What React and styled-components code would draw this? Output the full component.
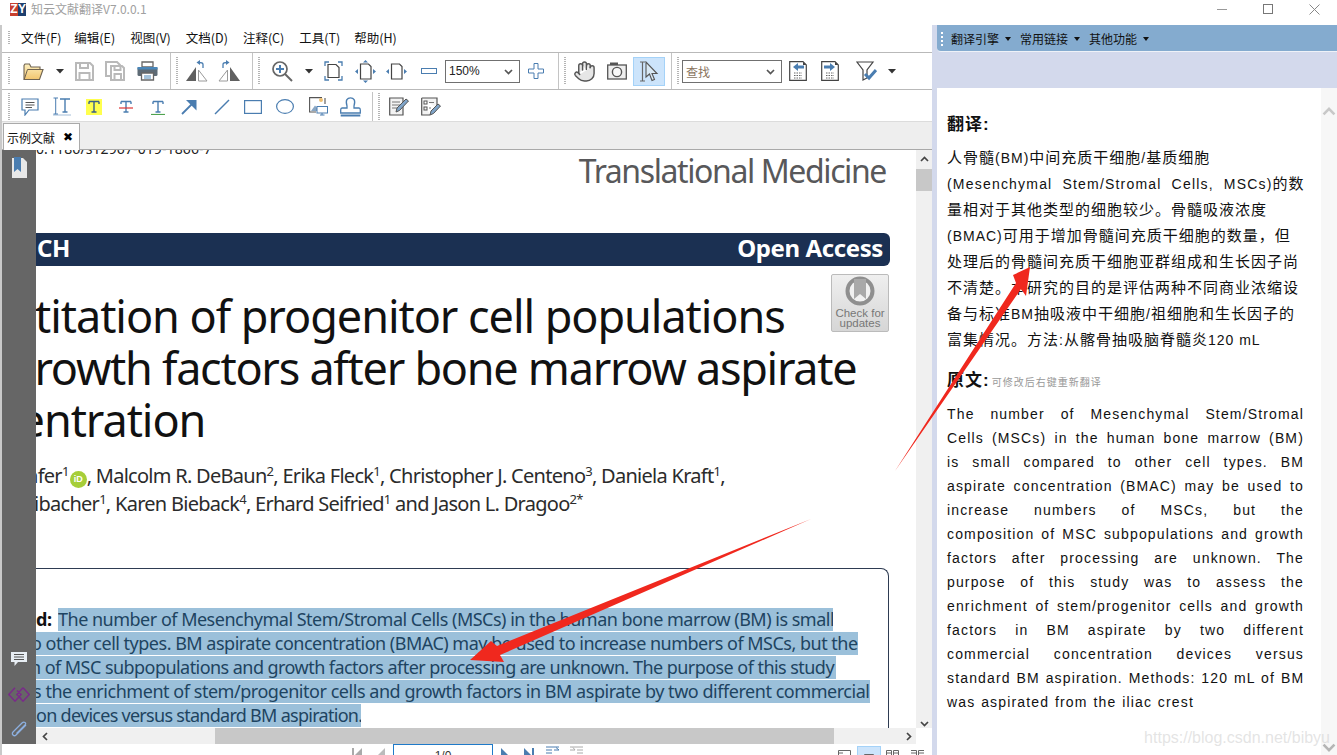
import React from "react";
import styled, { createGlobalStyle } from "styled-components";
import { Hand } from "lucide-react";

const cjk = `"Noto Sans CJK SC", sans-serif`;
const ui = `"Liberation Sans", "Noto Sans CJK SC", sans-serif`;
const pdf = `"Noto Sans", "Open Sans", sans-serif`;
const BLUE = "#4a7db0";

const Global = createGlobalStyle`
  html, body { margin: 0; padding: 0; background: #fff; }
  * { box-sizing: border-box; }
`;

const Ico = ({ w = 20, h = 20, vb, children }) => (
  <svg width={w} height={h} viewBox={vb || `0 0 ${w} ${h}`} fill="none">
    {children}
  </svg>
);

/* toolbar 1 */
const FolderIcon = () => (
  <Ico w={21} h={20}>
    <defs>
      <linearGradient id="fold" x1="0" y1="0" x2="0" y2="1">
        <stop offset="0" stopColor="#fdf0c0" />
        <stop offset="1" stopColor="#f2c56e" />
      </linearGradient>
    </defs>
    <path d="M1 4.5V18.5H16.5L20 8.5H17V6H8L6.5 3H2Z" fill="url(#fold)" stroke="#6e6250" strokeWidth="1.1" />
    <path d="M1.2 18.5L4.5 8.5H20" stroke="#6e6250" strokeWidth="1" />
  </Ico>
);
const Caret = () => (
  <Ico w={8} h={5}>
    <path d="M0 0H8L4 4.5Z" fill="#333" />
  </Ico>
);
const SmallCaret = styled.i`
  width: 0;
  height: 0;
  border: 3px solid transparent;
  border-top: 4px solid #111;
  border-bottom: none;
`;
const SaveIcon = () => (
  <Ico w={19} h={19}>
    <path d="M1 1H15L18 4V18H1Z" stroke="#b9b9b9" strokeWidth="2" />
    <path d="M5 1V6H13V1M4.5 18V11H14.5V18" stroke="#b9b9b9" strokeWidth="2" />
  </Ico>
);
const SaveAllIcon = () => (
  <Ico w={20} h={20}>
    <path d="M1 1H12L15 4V15H1Z" stroke="#b9b9b9" strokeWidth="2" />
    <path d="M6 5H17L19 7V19H6Z" fill="#fff" stroke="#b9b9b9" strokeWidth="2" />
    <path d="M9.5 5V9H15.5V5M9.5 19V13H16V19" stroke="#b9b9b9" strokeWidth="2" />
  </Ico>
);
const PrintIcon = () => (
  <Ico w={21} h={20}>
    <path d="M5 1H16V6H5Z" fill="#fff" stroke="#666" strokeWidth="1.3" />
    <rect x="0.5" y="6" width="20" height="9" rx="1.5" fill="#5d6a75" />
    <rect x="0.5" y="6" width="20" height="2.5" fill="#4a86b8" />
    <path d="M4.5 12H16.5V19H4.5Z" fill="#fff" stroke="#666" strokeWidth="1.3" />
    <path d="M7 15H14M7 17H14" stroke="#4a86b8" />
  </Ico>
);
const MirrorIcon = ({ flip }) => (
  <Ico w={22} h={22}>
    <g transform={flip ? "translate(22 0) scale(-1 1)" : undefined}>
      <path d="M10 7L0 21H10Z" fill="#606060" />
      <path d="M12.5 10L21 21H12.5Z" fill="#fff" stroke="#9a9a9a" />
      <path d="M17 8V4.5C17 3 15.5 2.5 13 2.5" stroke={BLUE} strokeWidth="1.3" />
      <path d="M14 0L10.5 2.5L14 5Z" fill={BLUE} />
    </g>
  </Ico>
);
const ZoomIcon = () => (
  <Ico w={21} h={21}>
    <circle cx="8" cy="8" r="7" fill="#fff" stroke="#666" strokeWidth="1.7" />
    <path d="M8 4V12M4 8H12" stroke={BLUE} strokeWidth="2" />
    <path d="M13 13L20 20" stroke="#666" strokeWidth="2" />
  </Ico>
);
const FitPageIcon = () => (
  <Ico w={19} h={20}>
    <path d="M1 5V1H5M14 1H18V5M1 15V19H5M14 19H18V15" stroke={BLUE} strokeWidth="1.3" />
    <path d="M4 3.5H12L15 6.5V16.5H4Z" fill="#fff" stroke="#444" strokeWidth="1.2" />
  </Ico>
);
const FitHeightIcon = () => (
  <Ico w={21} h={23}>
    <path d="M5.5 4H13.5L16 6.5V19H5.5Z" fill="#fff" stroke="#444" strokeWidth="1.2" />
    <path d="M10.5 0L8 2.5H13ZM10.5 23L8 20.5H13ZM0 11.5L3 9V14ZM21 11.5L18 9V14Z" fill={BLUE} />
  </Ico>
);
const FitWidthIcon = () => (
  <Ico w={21} h={17}>
    <path d="M5.5 1H13.5L16 3.5V16H5.5Z" fill="#fff" stroke="#444" strokeWidth="1.2" />
    <path d="M0 8.5L3 6V11ZM21 8.5L18 6V11Z" fill={BLUE} />
  </Ico>
);
const MinusIcon = () => (
  <Ico w={16} h={6}>
    <rect x="0.5" y="0.5" width="15" height="5" stroke={BLUE} />
  </Ico>
);
const PlusIcon = () => (
  <Ico w={16} h={16}>
    <path d="M6 .5H10V6H15.5V10H10V15.5H6V10H.5V6H6Z" stroke={BLUE} fill="#fff" />
  </Ico>
);
const CameraIcon = () => (
  <Ico w={20} h={18}>
    <path d="M3 3V0.5H11V3" fill="#555" />
    <rect x="0.7" y="3" width="18.6" height="14" fill="#eee" stroke="#555" strokeWidth="1.3" />
    <circle cx="10" cy="10" r="4.6" fill="#f8f8f8" stroke="#555" strokeWidth="1.4" />
  </Ico>
);
const SelectIcon = () => (
  <Ico w={20} h={21}>
    <path d="M1 1H6M1 20H6M3.5 1V20" stroke="#666" strokeWidth="1.2" />
    <path d="M7 1V16L10.5 13L13 19.5L15.5 18.5L13 12.5H18Z" fill="#d8e8f4" stroke="#555" strokeWidth="1.1" />
  </Ico>
);
const DocArrow = ({ right }) => (
  <Ico w={18} h={20}>
    <path d="M.7.7H14L17.3 4V19.3H.7Z" fill="#fff" stroke="#444" strokeWidth="1.2" />
    <path d="M14 .7V4H17.3Z" fill="#444" />
    <path d={right ? "M3 4.5H9V2L14 6L9 10V7.5H3Z" : "M15 4.5H9V2L4 6L9 10V7.5H15Z"} fill={BLUE} />
    <path d="M5 12H13M5 14.5H13M5 17H13" stroke="#666" strokeDasharray="1.5 1" />
  </Ico>
);
const FilterIcon = () => (
  <Ico w={21} h={20}>
    <path d="M1 1H17L11 9V17L7 19V9Z" fill="#fff" stroke="#444" strokeWidth="1.2" />
    <path d="M9 13L13 17L20 9" stroke={BLUE} strokeWidth="3" />
  </Ico>
);

/* toolbar 2 */
const CommentIcon = () => (
  <Ico w={18} h={18}>
    <path d="M1 1H17V12H8L4 17V12H1Z" fill="#fff" stroke={BLUE} strokeWidth="1.2" />
    <path d="M4.5 4.5H13.5M4.5 7H13.5M4.5 9.5H11" stroke="#555" />
  </Ico>
);
const TextSelIcon = () => (
  <Ico w={18} h={19}>
    <path d="M.5 1H5M.5 17H5M2.7 1V17" stroke={BLUE} />
    <path d="M7 2H17M12 2V15M9.5 15H14.5" stroke={BLUE} strokeWidth="1.4" />
    <path d="M.5 18H18" stroke={BLUE} strokeDasharray="1 1" />
  </Ico>
);
const TMark = ({ bg, line, y = 17 }) => (
  <Ico w={16} h={16}>
    {bg && <rect width="16" height="16" fill={bg} />}
    <path d="M3 2.5H13M8 2.5V13M5.5 13H10.5M3 2.5V5M13 2.5V5" stroke={bg ? "#3a5f8a" : BLUE} strokeWidth="1.4" />
    {line && <path d={`M1 ${y > 15 ? 15.5 : y}H15`} stroke={line} strokeWidth="1.2" />}
  </Ico>
);
const ArrowIcon = () => (
  <Ico w={16} h={16}>
    <path d="M1 15L12 4" stroke={BLUE} strokeWidth="1.8" />
    <path d="M5 1H15.5V11.5Z" fill={BLUE} />
  </Ico>
);
const LineIcon = () => (
  <Ico w={16} h={16}>
    <path d="M1 15L15 1" stroke={BLUE} strokeWidth="1.4" />
  </Ico>
);
const RectIcon = () => (
  <Ico w={18} h={14}>
    <rect x=".6" y=".6" width="16.8" height="12.8" stroke={BLUE} strokeWidth="1.2" />
  </Ico>
);
const OvalIcon = () => (
  <Ico w={18} h={15}>
    <ellipse cx="9" cy="7.5" rx="8.4" ry="6.9" stroke={BLUE} strokeWidth="1.2" />
  </Ico>
);
const ImageIcon = () => (
  <Ico w={19} h={19}>
    <path d="M13 .6H.6V15H7" stroke="#555" strokeWidth="1.1" />
    <path d="M2 14L6 8.5L9 12V14Z" fill="#8aa7c4" />
    <circle cx="12" cy="3" r="2" fill="#f0c070" />
    <path d="M16 1V7" stroke="#555" strokeWidth="1.1" />
    <rect x="8" y="9.5" width="10.5" height="6.5" fill="#fff" stroke={BLUE} />
    <path d="M11 18H15.5M13 16V18" stroke={BLUE} />
  </Ico>
);
const StampIcon = () => (
  <Ico w={21} h={20}>
    <path d="M7 9C5 3 7.5 .8 10.5 .8S16 3 14 9V11H19C20 11 20.3 12 20.3 13V16H.7V13C.7 12 1 11 2 11H7Z" fill="#fff" stroke={BLUE} strokeWidth="1.3" />
    <path d="M.7 18.5H20.3" stroke={BLUE} strokeWidth="2" />
  </Ico>
);
const NoteIcon = () => (
  <Ico w={20} h={19}>
    <path d="M.7 1H14V18H.7Z" fill="#f3f3f3" stroke="#555" strokeWidth="1.2" />
    <path d="M3 5H11M3 8H11M3 11H8" stroke="#777" />
    <path d="M7 15L8 11L17 2L19.5 4L10.5 13.5Z" fill="#7fa4c8" stroke="#555" />
  </Ico>
);
const CheckNoteIcon = () => (
  <Ico w={20} h={19}>
    <path d="M.7 1H16V11M9 18H.7V1" fill="#f3f3f3" stroke="#555" strokeWidth="1.2" />
    <rect x="3" y="4" width="3" height="3" stroke="#555" />
    <rect x="3" y="10" width="3" height="3" stroke="#555" />
    <path d="M8 5.5H13M8 11H10" stroke="#777" />
    <path d="M9 18L10 14L17 7L19.5 9L12.5 16.5Z" fill="#7fa4c8" stroke="#555" />
  </Ico>
);
const Grip = styled.i`
  display: block;
  flex: none;
  width: 2px;
  height: ${(p) => p.$h || 28}px;
  margin-left: ${(p) => p.$ml || 0}px;
  background: repeating-linear-gradient(#b5b5b5 0 1px, transparent 1px 2px);
`;

/* page */
const Page = styled.div`
  position: relative;
  width: 1337px;
  height: 755px;
  overflow: hidden;
  background: #fff;
  font-family: ${ui};
`;
const TitleBar = styled.div`
  height: 25px;
  display: flex;
  align-items: center;
  padding-left: 10px;
`;
const LogoBox = styled.div`
  display: flex;
  margin-top: -7px;
`;
const LogoLetter = styled.span`
  width: 8px;
  height: 13px;
  background: ${(p) => p.$bg};
  color: #fff;
  font: bold 12px/13px "Liberation Sans", sans-serif;
  text-align: center;
`;
const AppName = styled.span`
  margin-left: 5px;
  margin-top: -8px;
  color: #a0a0a0;
  font: 12px ${cjk};
`;
const WinBtns = styled.div`
  margin-left: auto;
  display: flex;
  align-items: center;
  margin-top: -7px;
  padding-right: 17px;
  gap: 35px;
`;
const Body = styled.div`
  display: flex;
  height: 730px;
`;
const LeftCol = styled.div`
  width: 932px;
  display: flex;
  flex-direction: column;
  border-left: 2px solid #c9c9c9;
`;
const MenuRow = styled.div`
  height: 28px;
  display: flex;
  align-items: center;
  padding: 0 0 2px 6px;
  border-bottom: 1px solid #b9b9b9;
`;
const MenuItem = styled.span`
  margin-left: ${(p) => p.$ml}px;
  font: 12.5px ${cjk};
  color: #111;
`;
const ToolRow = styled.div`
  height: ${(p) => p.$h}px;
  display: flex;
  align-items: center;
  padding: ${(p) => p.$pt || 0}px 0 0 6px;
  border-bottom: 1px solid ${(p) => p.$line};
  flex: none;
`;
const Tool = styled.span`
  display: flex;
  flex: none;
  margin-left: ${(p) => p.$ml || 0}px;
`;
const Sep = styled.i`
  flex: none;
  align-self: stretch;
  width: 1px;
  margin-left: ${(p) => p.$ml}px;
  margin-right: ${(p) => p.$mr}px;
  background: #c4c4c4;
`;
const Combo = styled.div`
  flex: none;
  width: ${(p) => p.$w}px;
  height: 23px;
  margin-left: ${(p) => p.$ml}px;
  display: flex;
  align-items: center;
  justify-content: space-between;
  padding: 0 6px 0 3px;
  border: 1px solid #707070;
  background: #fff;
  font: 12px ${ui};
  color: ${(p) => p.$color};
`;
const Hot = styled.span`
  flex: none;
  width: 32px;
  height: 29px;
  margin-left: ${(p) => p.$ml}px;
  display: flex;
  align-items: center;
  justify-content: center;
  background: #cce4fb;
  border: 1px solid #a4d2f8;
`;
const TabStrip = styled.div`
  height: 28px;
  flex: none;
  background: #eeeeee;
  border-bottom: 1px solid #a9a9a9;
  padding: 1px 0 0 1px;
`;
const Tab = styled.div`
  width: 77px;
  height: 27px;
  display: flex;
  align-items: center;
  padding-left: 3px;
  gap: 8px;
  background: #fff;
  border: 1px solid #aaa;
  border-bottom: none;
  font: 12px ${cjk};
  color: #111;
`;
const TabClose = styled.span`
  font: bold 12px "DejaVu Sans", sans-serif;
  color: #000;
`;
const Viewer = styled.div`
  display: grid;
  grid-template-columns: 34px 880px 16px;
  grid-template-rows: 578px 16px;
  flex: none;
`;
const SideRail = styled.div`
  grid-row: 1 / 3;
  background: #666;
  display: flex;
  flex-direction: column;
  align-items: center;
  padding-top: 6px;
  position: relative;
  z-index: 2;
`;
const RailSpacer = styled.div`
  flex: 1;
`;
const RailBtn = styled.span`
  display: flex;
  height: ${(p) => p.$h}px;
  align-items: center;
`;
const Sheet = styled.div`
  overflow: hidden;
  background: #fff;
  display: flex;
  flex-direction: column;
  font-family: ${pdf};
  white-space: nowrap;
`;
const Doi = styled.div`
  margin-top: -11px;
  font-size: 14px;
  line-height: 19px;
  color: #222;
  letter-spacing: 0.1px;
`;
const Journal = styled.div`
  margin-top: -9px;
  text-align: right;
  padding-right: 30px;
  font-size: 32px;
  line-height: 44px;
  letter-spacing: -1.4px;
  color: #58585a;
`;
const Banner = styled.div`
  margin-top: 40px;
  width: 854px;
  height: 33px;
  flex: none;
  padding: 0 7px 5px 1px;
  display: flex;
  justify-content: space-between;
  align-items: center;
  background: #1b3052;
  border-radius: 0 6px 6px 0;
  color: #fff;
  font-size: 24px;
  font-weight: 700;
  letter-spacing: -0.4px;
`;
const TitleBlock = styled.div`
  display: flex;
  margin-top: 8px;
`;
const TitleText = styled.div`
  flex: 0 0 795px;
  min-width: 0;
  padding-top: 16px;
  font-size: 45px;
  line-height: 52px;
  color: #111;
  letter-spacing: -1.05px;
`;
const TitleLine = styled.div`
  margin-left: ${(p) => p.$ml || 0}px;
  letter-spacing: ${(p) => p.$ls || "inherit"};
`;
const Crossmark = styled.div`
  width: 58px;
  height: 58px;
  flex: none;
  display: flex;
  flex-direction: column;
  align-items: center;
  border: 1px solid #bbb;
  border-radius: 2px;
  background: linear-gradient(#efefef, #d6d6d6);
  font: 11.5px/10px "Liberation Sans", sans-serif;
  color: #777;
  padding-top: 1px;
  text-align: center;
  white-space: normal;
`;
const CheckLabel = styled.span`
  margin-top: 2px;
`;
const Authors = styled.div`
  margin-top: 16px;
  font-size: 20px;
  line-height: 28px;
  color: #2b2b2b;
  letter-spacing: -0.72px;
  sup {
    font-size: 13px;
    line-height: 0;
    vertical-align: 7px;
  }
`;
const AuthorLine = styled.div`
  height: 28px;
  margin-left: ${(p) => p.$ml || 0}px;
`;
const Orcid = styled.span`
  display: inline-block;
  vertical-align: 1px;
  width: 17px;
  height: 17px;
  margin: 0 0 0 1px;
  border-radius: 50%;
  background: #a6ce39;
  color: #fff;
  font: bold 9px/17px "Liberation Sans", sans-serif;
  letter-spacing: 0;
  text-align: center;
`;
const AbstractBox = styled.div`
  margin-top: 50px;
  width: 853px;
  height: 160px;
  flex: none;
  padding-top: 39px;
  border-top: 1px solid #2e3b52;
  border-right: 1px solid #2e3b52;
  border-radius: 0 8px 0 0;
  font-size: 18px;
  letter-spacing: -0.5px;
`;
const AbsRow = styled.div`
  display: flex;
  height: 24px;
`;
const AbsLabel = styled.b`
  width: 22px;
  flex: none;
  line-height: 23px;
  color: #111;
  overflow: hidden;
`;
const Sel = styled.span`
  display: block;
  height: 23px;
  line-height: 22px;
  background: #9bc0da;
  color: #1e4461;
  overflow: hidden;
  width: ${(p) => p.$w}px;
  text-indent: ${(p) => p.$cut || 0}px;
  letter-spacing: ${(p) => p.$ls || "inherit"};
`;
const VScroll = styled.div`
  background: #f0f0f0;
  display: flex;
  flex-direction: column;
  align-items: center;
  padding-top: 5px;
`;
const VThumb = styled.div`
  width: 16px;
  height: 22px;
  flex: none;
  margin-top: 5px;
  background: #c8c8c8;
`;
const HScroll = styled.div`
  display: flex;
  align-items: center;
  background: #f0f0f0;
  padding: 0 3px 0 5px;
`;
const HThumb = styled.div`
  width: 619px;
  height: 16px;
  margin-left: 165px;
  margin-right: auto;
  background: #c8c8c8;
`;
const StatusBar = styled.div`
  height: 11px;
  flex: none;
  overflow: hidden;
  display: flex;
  align-items: flex-start;
`;
const NavIco = styled.span`
  display: flex;
  flex: none;
  margin-left: ${(p) => p.$ml}px;
  margin-top: ${(p) => p.$mt || 4}px;
`;
const PageInput = styled.div`
  flex: none;
  width: 100px;
  height: 24px;
  margin-left: 8px;
  border: 1px solid #1f7ac8;
  text-align: center;
  font: 12px/22px "Liberation Sans", sans-serif;
  color: #333;
`;
const ViewOn = styled.span`
  flex: none;
  width: 24px;
  height: 20px;
  margin: 2px 0 0 6px;
  padding: 3px 0 0 6px;
  background: #cce4fb;
  border: 1px solid #a4d2f8;
`;
const RightCol = styled.div`
  width: 405px;
  display: flex;
  flex-direction: column;
  background: #d3d9ec;
  padding-left: 5px;
`;
const BlueBar = styled.div`
  height: 27px;
  flex: none;
  display: flex;
  align-items: center;
  padding: 1px 0 0 4px;
  background: #84abcf;
  border-bottom: 1px solid #eef2f8;
  border-radius: 0 0 0 4px;
  font: 12px ${cjk};
  color: #111;
`;
const BlueItem = styled.span`
  display: flex;
  align-items: center;
  gap: 6px;
  margin-left: ${(p) => p.$ml}px;
`;
const Dots = styled.i`
  width: 2px;
  height: 14px;
  background: repeating-linear-gradient(#fff 0 2px, transparent 2px 4px);
`;
const Strip = styled.div`
  height: 36px;
  flex: none;
`;
const Pane = styled.div`
  flex: 1;
  display: flex;
  min-height: 0;
`;
const PaneBody = styled.div`
  width: 384px;
  flex: none;
  background: #fff;
  padding: 27px 0 0 10px;
  color: #111;
`;
const PaneHead = styled.div`
  height: 20px;
  display: flex;
  align-items: baseline;
  gap: 2px;
  font: bold 17px/20px ${ui};
  letter-spacing: 1px;
  color: #111;
`;
const HeadNote = styled.span`
  font: 10px ${cjk};
  letter-spacing: 1px;
  color: #999;
`;
const CnText = styled.div`
  margin: 9px 0 19px;
  width: 357px;
`;
const CnLine = styled.div`
  height: 26px;
  line-height: 26px;
  font-size: 14px;
  letter-spacing: ${(p) => (p.$fill ? 1.2 : 1)}px;
  word-spacing: ${(p) => (p.$fill ? 4.9 : 0)}px;
  white-space: nowrap;
  span {
    font-family: ${cjk};
    font-size: 15px;
    letter-spacing: 1px;
  }
`;
const EnText = styled.div`
  margin-top: 11px;
  width: 357px;
`;
const EnLine = styled.div`
  height: 24px;
  line-height: 24px;
  font-size: 14px;
  letter-spacing: 1.15px;
  word-spacing: 0.8px;
  white-space: nowrap;
  text-align-last: ${(p) => (p.$last ? "left" : "justify")};
`;
const PaneScroll = styled.div`
  width: 16px;
  background: #f7f7f7;
  display: flex;
  flex-direction: column;
  align-items: center;
  justify-content: space-between;
  padding: 17px 0 1px;
`;
const Overlay = styled.svg`
  position: absolute;
  left: 0;
  top: 0;
  pointer-events: none;
`;
const Watermark = styled.div`
  position: absolute;
  right: 7px;
  bottom: 8px;
  font: 16px "Liberation Sans", sans-serif;
  color: rgba(205, 205, 205, 0.55);
`;

const Chevron = ({ dir, color = "#444", size = 9 }) => {
  const d = { up: "M1 6L4.5 2.5L8 6", down: "M1 3L4.5 6.5L8 3", left: "M6 1L2.5 4.5L6 8", right: "M3 1L6.5 4.5L3 8" }[dir];
  return (
    <svg width={size} height={size} viewBox="0 0 9 9" fill="none">
      <path d={d} stroke={color} strokeWidth="1.7" />
    </svg>
  );
};

const Mixed = ({ text }) =>
  text.split(/([\u4e00-\u9fff。，]+)/).map((part, i) => (i % 2 ? <span key={i}>{part}</span> : part));

const cnLines = [
  ["人骨髓(BM)中间充质干细胞/基质细胞"],
  ["(Mesenchymal Stem/Stromal Cells, MSCs)的数", true],
  ["量相对于其他类型的细胞较少。骨髓吸液浓度"],
  ["(BMAC)可用于增加骨髓间充质干细胞的数量，但"],
  ["处理后的骨髓间充质干细胞亚群组成和生长因子尚"],
  ["不清楚。本研究的目的是评估两种不同商业浓缩设"],
  ["备与标准BM抽吸液中干细胞/祖细胞和生长因子的"],
  ["富集情况。方法:从髂骨抽吸脑脊髓炎120 mL"],
];
const enLines = [
  "The number of Mesenchymal Stem/Stromal",
  "Cells (MSCs) in the human bone marrow (BM)",
  "is small compared to other cell types. BM",
  "aspirate concentration (BMAC) may be used to",
  "increase numbers of MSCs, but the",
  "composition of MSC subpopulations and growth",
  "factors after processing are unknown. The",
  "purpose of this study was to assess the",
  "enrichment of stem/progenitor cells and growth",
  "factors in BM aspirate by two different",
  "commercial concentration devices versus",
  "standard BM aspiration. Methods: 120 mL of BM",
  "was aspirated from the iliac crest",
];
const menus = [
  ["文件(F)", 11],
  ["编辑(E)", 13],
  ["视图(V)", 15],
  ["文档(D)", 15],
  ["注释(C)", 15],
  ["工具(T)", 15],
  ["帮助(H)", 14],
];

export default function App() {
  return (
    <Page>
      <Global />
      <TitleBar>
        <LogoBox>
          <LogoLetter $bg="#c8402e">Z</LogoLetter>
          <LogoLetter $bg="#1d3f6e">Y</LogoLetter>
        </LogoBox>
        <AppName>知云文献翻译V7.0.0.1</AppName>
        <WinBtns>
          <Ico w={11} h={11}>
            <path d="M0 5.5H10" stroke="#999" />
          </Ico>
          <Ico w={11} h={11}>
            <rect x=".5" y=".5" width="9" height="9" stroke="#777" />
          </Ico>
          <Ico w={11} h={11}>
            <path d="M.5 .5L10.5 10.5M10.5 .5L.5 10.5" stroke="#888" />
          </Ico>
        </WinBtns>
      </TitleBar>
      <Body>
        <LeftCol>
          <MenuRow>
            <Grip $h={13} />
            {menus.map(([label, ml]) => (
              <MenuItem key={label} $ml={ml}>
                {label}
              </MenuItem>
            ))}
          </MenuRow>
          <ToolRow $h={37} $line="#b9b9b9">
            <Grip />
            <Tool $ml={13}><FolderIcon /></Tool>
            <Tool $ml={12}><Caret /></Tool>
            <Tool $ml={11}><SaveIcon /></Tool>
            <Tool $ml={11}><SaveAllIcon /></Tool>
            <Tool $ml={12}><PrintIcon /></Tool>
            <Sep $ml={12} $mr={5} />
            <Grip />
            <Tool $ml={8}><MirrorIcon /></Tool>
            <Tool $ml={10}><MirrorIcon flip /></Tool>
            <Sep $ml={12} $mr={5} />
            <Grip />
            <Tool $ml={12}><ZoomIcon /></Tool>
            <Tool $ml={12}><Caret /></Tool>
            <Tool $ml={11}><FitPageIcon /></Tool>
            <Tool $ml={12}><FitHeightIcon /></Tool>
            <Tool $ml={10}><FitWidthIcon /></Tool>
            <Tool $ml={14}><MinusIcon /></Tool>
            <Combo $w={75} $ml={8} $color="#222">
              150%
              <Chevron dir="down" color="#555" />
            </Combo>
            <Tool $ml={8}><PlusIcon /></Tool>
            <Sep $ml={14} $mr={5} />
            <Grip />
            <Tool $ml={7}>
              <Hand size={23} color="#555" fill="#e6e6e6" strokeWidth={1.5} />
            </Tool>
            <Tool $ml={11}><CameraIcon /></Tool>
            <Hot $ml={6}><SelectIcon /></Hot>
            <Sep $ml={6} $mr={5} />
            <Grip />
            <Combo $w={100} $ml={3} $color="#8a7560">
              查找
              <Chevron dir="down" color="#555" />
            </Combo>
            <Tool $ml={7}><DocArrow /></Tool>
            <Tool $ml={14}><DocArrow right /></Tool>
            <Tool $ml={17}><FilterIcon /></Tool>
            <Tool $ml={11}><Caret /></Tool>
          </ToolRow>
          <ToolRow $h={32} $pt={2} $line="#dcdcdc">
            <Grip />
            <Tool $ml={11}><CommentIcon /></Tool>
            <Tool $ml={14}><TextSelIcon /></Tool>
            <Tool $ml={15}><TMark bg="#ffff4d" /></Tool>
            <Tool $ml={16}><TMark line="#d33" y={9} /></Tool>
            <Tool $ml={16}><TMark line="#4fa34f" /></Tool>
            <Tool $ml={15}><ArrowIcon /></Tool>
            <Tool $ml={17}><LineIcon /></Tool>
            <Tool $ml={14}><RectIcon /></Tool>
            <Tool $ml={14}><OvalIcon /></Tool>
            <Tool $ml={15}><ImageIcon /></Tool>
            <Tool $ml={12}><StampIcon /></Tool>
            <Sep $ml={11} $mr={5} />
            <Grip />
            <Tool $ml={9}><NoteIcon /></Tool>
            <Tool $ml={12}><CheckNoteIcon /></Tool>
          </ToolRow>
          <TabStrip>
            <Tab>
              示例文献
              <TabClose>✖</TabClose>
            </Tab>
          </TabStrip>
          <Viewer>
            <SideRail>
              <RailBtn $h={24}>
                <Ico w={17} h={22}>
                  <path d="M1 1H12L16 5V21H1Z" fill="#e8e8e8" />
                  <path d="M3 0H10V15L6.5 12L3 15Z" fill="#4a7db0" />
                </Ico>
              </RailBtn>
              <RailSpacer />
              <RailBtn $h={32}>
                <Ico w={16} h={16}>
                  <path d="M0 1H16V11H7L3.5 15V11H0Z" fill="#e8eef4" />
                  <path d="M3 3.5H13M3 6H13M3 8.5H13" stroke="#555" />
                </Ico>
              </RailBtn>
              <RailBtn $h={38}>
                <Ico w={22} h={15}>
                  <path d="M7 .8L.8 7.5L7 14.2L13.2 7.5L9 3.5M15 .8L8.8 7.5L13 11.5M15 .8L21.2 7.5L15 14.2L11 10" stroke="#7a2a8a" strokeWidth="1.4" />
                </Ico>
              </RailBtn>
              <RailBtn $h={31}>
                <Ico w={20} h={20}>
                  <path d="M17 6L7 16C5 18 2 15 4 13L13 4C15 2 18 4 16 6L7.5 14.5" stroke="#8db0e0" strokeWidth="1.3" />
                </Ico>
              </RailBtn>
            </SideRail>
            <Sheet>
              <Doi>0.1186/s12967-019-1866-7</Doi>
              <Journal>Translational Medicine</Journal>
              <Banner>
                <span>CH</span>
                <span>Open Access</span>
              </Banner>
              <TitleBlock>
                <TitleText>
                  <TitleLine $ml={-1}>titation of progenitor cell populations</TitleLine>
                  <TitleLine $ml={-28} $ls="-1.27px">growth factors after bone marrow aspirate</TitleLine>
                  <TitleLine $ml={-37}>centration</TitleLine>
                </TitleText>
                <Crossmark>
                  <Ico w={34} h={30}>
                    <circle cx="17" cy="15" r="12.5" fill="#f1f1f1" stroke="#8f8f8f" strokeWidth="4" />
                    <path d="M11 3H23V23L17 18L11 23Z" fill="#a9a9a9" />
                  </Ico>
                  <CheckLabel>Check for updates</CheckLabel>
                </Crossmark>
              </TitleBlock>
              <Authors>
                <AuthorLine $ml={-10}>
                  nfer<sup>1</sup>
                  <Orcid>iD</Orcid>, Malcolm R. DeBaun<sup>2</sup>, Erika Fleck<sup>1</sup>, Christopher J. Centeno<sup>3</sup>, Daniela Kraft<sup>1</sup>,
                </AuthorLine>
                <AuthorLine $ml={-2}>
                  ibacher<sup>1</sup>, Karen Bieback<sup>4</sup>, Erhard Seifried<sup>1</sup> and Jason L. Dragoo<sup>2*</sup>
                </AuthorLine>
              </Authors>
              <AbstractBox>
                <AbsRow>
                  <AbsLabel>d:</AbsLabel>
                  <Sel $w={775}>The number of Mesenchymal Stem/Stromal Cells (MSCs) in the human bone marrow (BM) is small</Sel>
                </AbsRow>
                <AbsRow>
                  <Sel $w={822} $cut={-5}>o other cell types. BM aspirate concentration (BMAC) may be used to increase numbers of MSCs, but the</Sel>
                </AbsRow>
                <AbsRow>
                  <Sel $w={800} $cut={-6} $ls="-0.55px">n of MSC subpopulations and growth factors after processing are unknown. The purpose of this study</Sel>
                </AbsRow>
                <AbsRow>
                  <Sel $w={834} $cut={-3} $ls="-0.46px">s the enrichment of stem/progenitor cells and growth factors in BM aspirate by two different commercial</Sel>
                </AbsRow>
                <AbsRow>
                  <Sel $w={325} $ls="-0.72px">on devices versus standard BM aspiration.</Sel>
                </AbsRow>
              </AbstractBox>
            </Sheet>
            <VScroll>
              <Chevron dir="up" />
              <VThumb />
              <RailSpacer />
              <Chevron dir="down" />
            </VScroll>
            <HScroll>
              <Chevron dir="left" />
              <HThumb />
              <Chevron dir="right" />
            </HScroll>
          </Viewer>
          <StatusBar>
            <NavIco $ml={350}>
              <Ico w={12} h={12}>
                <path d="M1 0V12" stroke="#aaa" strokeWidth="2" />
                <path d="M3 7L10 0V12H3Z" fill="#aaa" />
              </Ico>
            </NavIco>
            <NavIco $ml={14}>
              <Ico w={7} h={12}>
                <path d="M0 7L7 0V12H0Z" fill="#bbb" />
              </Ico>
            </NavIco>
            <PageInput>1/0</PageInput>
            <NavIco $ml={8}>
              <Ico w={7} h={12}>
                <path d="M0 0L7 7V12H0Z" fill={BLUE} />
              </Ico>
            </NavIco>
            <NavIco $ml={16}>
              <Ico w={10} h={12}>
                <path d="M0 0L7 7V12H0Z" fill={BLUE} />
                <path d="M9 0V12" stroke={BLUE} strokeWidth="2" />
              </Ico>
            </NavIco>
            <NavIco $ml={12} $mt={2}>
              <Ico w={13} h={10}>
                <path d="M0 1H13M0 4H6M0 7H6M0 10H13" stroke={BLUE} />
                <path d="M8 4H13L10 1.5" stroke={BLUE} />
              </Ico>
            </NavIco>
            <NavIco $ml={11} $mt={2}>
              <Ico w={13} h={10}>
                <path d="M0 1H13M7 4H13M7 7H13M0 10H13" stroke="#aaa" />
                <path d="M0 4H5L3 1.5" stroke="#aaa" />
              </Ico>
            </NavIco>
            <NavIco $ml={255} $mt={6}>
              <Ico w={13} h={10}>
                <path d="M.5 .5H12.5V10H.5ZM.5 3H5M.5 6H5" stroke="#666" />
              </Ico>
            </NavIco>
            <ViewOn>
              <Ico w={10} h={10}>
                <path d="M.5 .5H9.5V10H.5ZM2 3H8" stroke="#666" />
              </Ico>
            </ViewOn>
            <NavIco $ml={5} $mt={6}>
              <Ico w={13} h={10}>
                <path d="M.5 .5H5.5V10H.5ZM7.5 .5H12.5V10H7.5ZM.5 3H5M8 3H12" stroke="#666" />
              </Ico>
            </NavIco>
            <NavIco $ml={12} $mt={6}>
              <Ico w={13} h={10}>
                <path d="M0 .5H5.5V10H0M13 .5H7.5V10H13M0 3H5M8 3H13" stroke="#666" />
              </Ico>
            </NavIco>
          </StatusBar>
        </LeftCol>
        <RightCol>
          <BlueBar>
            <Dots />
            <BlueItem $ml={8}>翻译引擎<SmallCaret /></BlueItem>
            <BlueItem $ml={9}>常用链接<SmallCaret /></BlueItem>
            <BlueItem $ml={9}>其他功能<SmallCaret /></BlueItem>
          </BlueBar>
          <Strip />
          <Pane>
            <PaneBody>
              <PaneHead>翻译:</PaneHead>
              <CnText>
                {cnLines.map(([text, fill]) => (
                  <CnLine key={text} $fill={fill}>
                    <Mixed text={text} />
                  </CnLine>
                ))}
              </CnText>
              <PaneHead>
                原文:
                <HeadNote>可修改后右键重新翻译</HeadNote>
              </PaneHead>
              <EnText>
                {enLines.map((line, i) => (
                  <EnLine key={line} $last={i === enLines.length - 1}>
                    {line}
                  </EnLine>
                ))}
              </EnText>
            </PaneBody>
            <PaneScroll>
              <Chevron dir="up" color="#c8c8c8" size={14} />
              <Chevron dir="down" color="#b5b5b5" size={14} />
            </PaneScroll>
          </Pane>
        </RightCol>
      </Body>
      <Overlay width="1337" height="755">
        <path d="M811 519L497 646L491 641L470 660L504 662L500 655Z" fill="#f0281e" />
        <path d="M895 471L1016 283L1013 275L1030 267L1026 296L1021 289Z" fill="#f0281e" />
      </Overlay>
      <Watermark>https://blog.csdn.net/bibyu</Watermark>
    </Page>
  );
}
